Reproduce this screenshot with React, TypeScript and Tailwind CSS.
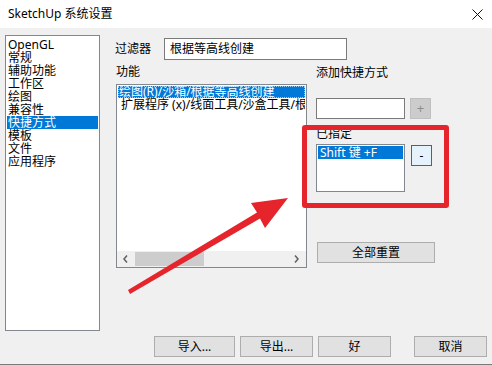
import React from "react";

const categories = ["OpenGL", "常规", "辅助功能", "工作区", "绘图", "兼容性", "快捷方式", "模板", "文件", "应用程序"];

function Btn({ label, w }: { label: string; w: string }) {
  return (
    <div className={`${w} flex h-[21px] items-center justify-center border border-[#adadad] bg-[#e1e1e1] text-[12px] leading-none text-black`}>
      {label}
    </div>
  );
}

export default function App() {
  return (
    <div className="relative h-[365px] w-[492px] overflow-hidden border-b border-[#7a7a7a] bg-[#f0f0f0] font-['Noto_Sans','Noto_Sans_CJK_SC',sans-serif] text-[12px] text-black">
      {/* Title bar */}
      <div className="flex h-[28px] items-center justify-between bg-white pl-[8px] pr-[10px]">
        <span className="leading-none">SketchUp 系统设置</span>
        <svg width="11" height="11" viewBox="0 0 11 11" className="mr-[-1px]">
          <path d="M0.5 0.5 L10.5 10.5 M10.5 0.5 L0.5 10.5" stroke="#111" strokeWidth="1" />
        </svg>
      </div>

      <div className="flex items-start pl-[5px] pt-[7px]">
        {/* Category list */}
        <div className="h-[296px] w-[95px] border border-[#828790] bg-white pt-[2px]">
          {categories.map((c) => (
            <div
              key={c}
              className={`mx-[1px] h-[13px] pl-[1px] leading-[13px] ${c === "快捷方式" ? "bg-[#0078d7] text-white" : ""}`}
            >
              {c}
            </div>
          ))}
        </div>

        {/* Right area */}
        <div className="flex h-[322px] flex-1 flex-col pl-[15px]">
          <div className="mt-[3px] flex items-center">
            <span className="w-[49px] leading-none">过滤器</span>
            <div className="flex h-[22px] w-[183px] items-center border border-[#7a7a7a] bg-white pl-[5px] leading-none">
              根据等高线创建
            </div>
          </div>

          <div className="flex">
            {/* Function list */}
            <div className="ml-[1px] w-[191px]">
              <div className="mt-[5px] h-[14px] leading-[14px]">功能</div>
              <div className="mt-[5px] flex h-[184px] flex-col border border-[#828790] bg-white">
                <div className="flex-1 overflow-hidden pt-[1px]">
                  <div className="mx-[1px] h-[12px] whitespace-nowrap bg-[#0078d7] pl-[1px] leading-[12px] text-white outline-1 outline-dotted outline-offset-[-1px] outline-[#9ccbf0]">
                    绘图(R)/沙箱/根据等高线创建
                  </div>
                  <div className="mx-[1px] h-[13px] overflow-hidden whitespace-nowrap pl-[3px] leading-[13px]">
                    扩展程序 (x)/线面工具/沙盒工具/根据等高线创建
                  </div>
                </div>
                <div className="flex h-[16px] items-center bg-[#f0f0f0]">
                  <svg width="18" height="16" viewBox="0 0 18 16">
                    <path d="M10 4.5 L7 8 L10 11.5" fill="none" stroke="#606060" strokeWidth="1.5" />
                  </svg>
                  <div className="h-[14px] w-[69px] bg-[#cdcdcd]" />
                  <div className="flex-1" />
                  <svg width="18" height="16" viewBox="0 0 18 16">
                    <path d="M7 4.5 L10 8 L7 11.5" fill="none" stroke="#606060" strokeWidth="1.5" />
                  </svg>
                </div>
              </div>
            </div>

            {/* Shortcut column */}
            <div className="ml-[9px] flex flex-col">
              <div className="mt-[6px] h-[14px] leading-[14px]">添加快捷方式</div>
              <div className="mt-[18px] flex gap-[5px]">
                <div className="h-[21px] w-[89px] border border-[#7a7a7a] bg-white" />
                <div className="flex h-[21px] w-[21px] items-center justify-center border border-[#bfbfbf] bg-[#cccccc] text-[13px] leading-none text-[#8c8c8c]">
                  +
                </div>
              </div>
              <div className="mt-[8px] h-[14px] leading-[14px]">已指定</div>
              <div className="mt-[3px] flex items-start gap-[6px]">
                <div className="h-[48px] w-[89px] border border-[#828790] bg-white pt-[1px]">
                  <div className="mx-[1px] h-[13px] bg-[#0078d7] pl-[2px] leading-[13px] text-white">Shift 键 +F</div>
                </div>
                <div className="mt-[1px] flex h-[21px] w-[21px] items-center justify-center border border-[#0078d7] bg-[#e5f1fb] leading-none">
                  -
                </div>
              </div>
              <div className="ml-[1px] mt-[50px]">
                <Btn label="全部重置" w="w-[118px]" />
              </div>
            </div>
          </div>

          {/* Bottom buttons */}
          <div className="mt-auto flex pl-[39px]">
            <Btn label="导入..." w="w-[81px]" />
            <div className="ml-[5px]">
              <Btn label="导出..." w="w-[73px]" />
            </div>
            <div className="ml-[5px]">
              <Btn label="好" w="w-[73px]" />
            </div>
            <div className="ml-[23px]">
              <Btn label="取消" w="w-[73px]" />
            </div>
          </div>
        </div>
      </div>

      {/* Annotation: red box */}
      <div className="absolute left-[302px] top-[125px] h-[83px] w-[147px] rounded-[3px] border-[5px] border-[#e5242b]" />

      {/* Annotation: red arrow */}
      <svg className="absolute left-0 top-0" width="492" height="365" viewBox="0 0 492 365">
        <polygon
          points="288,198 251,203 257,212.5 128,290 130,294 260,218.5 265,228"
          fill="#e5242b"
        />
      </svg>
    </div>
  );
}
